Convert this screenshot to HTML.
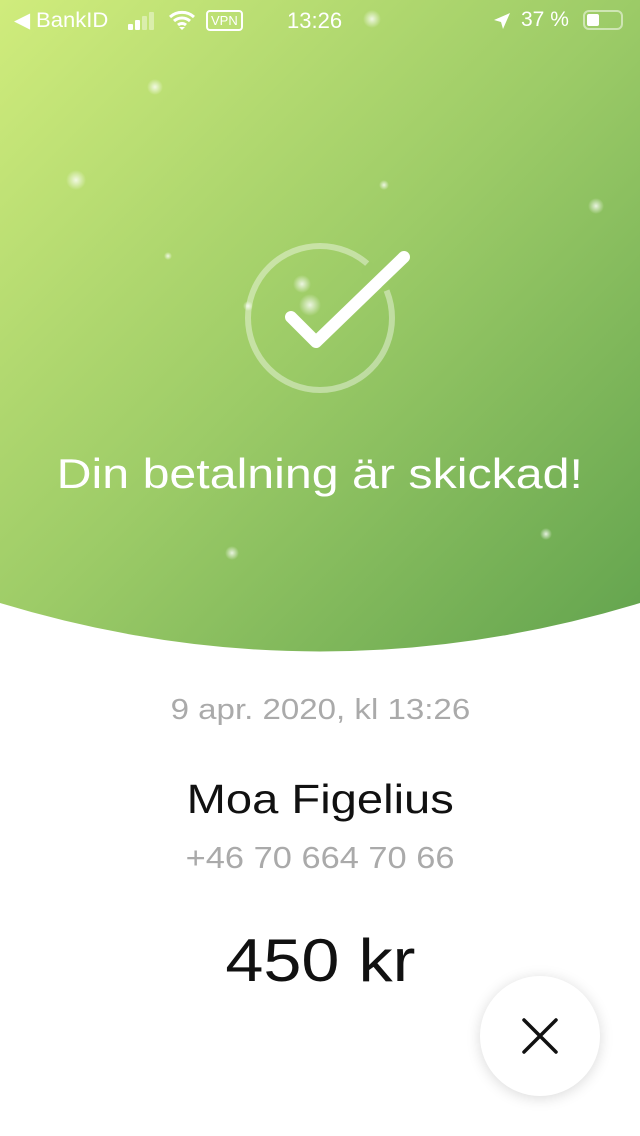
<!DOCTYPE html>
<html><head><meta charset="utf-8"><style>
html,body{margin:0;padding:0;width:640px;height:1136px;overflow:hidden;background:#fff;font-family:"Liberation Sans",sans-serif;}
.abs{position:absolute}
.sb{color:#fff;font-size:21px;top:8px}
.c{position:absolute;left:0;width:640px;text-align:center}
.c span{display:inline-block}
</style></head><body>
<svg class="abs" style="left:0;top:0" width="640" height="660" viewBox="0 0 640 660">
<defs><linearGradient id="g" x1="0" y1="0" x2="1" y2="1">
<stop offset="0" stop-color="#d0ec7c"/><stop offset="0.5" stop-color="#9ccb67"/><stop offset="1" stop-color="#62a34e"/></linearGradient>
<radialGradient id="d"><stop offset="0" stop-color="#fff" stop-opacity=".8"/><stop offset="1" stop-color="#fff" stop-opacity="0"/></radialGradient></defs>
<path d="M0 0H640V603Q320 700 0 603Z" fill="url(#g)"/>
<g fill="url(#d)">
<circle cx="155" cy="87" r="8"/><circle cx="76" cy="180" r="10"/><circle cx="384" cy="185" r="5"/><circle cx="596" cy="206" r="8"/>
<circle cx="168" cy="256" r="4"/><circle cx="302" cy="284" r="9"/><circle cx="310" cy="305" r="11"/><circle cx="248" cy="306" r="5"/>
<circle cx="232" cy="553" r="7"/><circle cx="546" cy="534" r="6"/><circle cx="372" cy="19" r="9"/>
</g>
<circle cx="320" cy="318" r="72" fill="none" stroke="#fff" stroke-opacity=".4" stroke-width="6"/>
<path d="M365 266 A72 72 0 0 1 383 292" fill="none" stroke="#9ccb67" stroke-width="14"/>
<path d="M291 317 L316 342 L404 257" fill="none" stroke="#fff" stroke-width="12" stroke-linecap="round" stroke-linejoin="round"/>
</svg>
<div class="abs sb" style="left:14px">◀ <span style="display:inline-block;transform:scaleX(1.05);transform-origin:left">BankID</span></div>
<svg class="abs" style="left:128px;top:11px" width="34" height="20"><rect x="0" y="13" width="5" height="6" fill="#fff" rx="1"/><rect x="7" y="9" width="5" height="10" fill="#fff" rx="1"/><rect x="14" y="5" width="5" height="14" fill="#fff" fill-opacity=".4" rx="1"/><rect x="21" y="1" width="5" height="18" fill="#fff" fill-opacity=".4" rx="1"/></svg>
<svg class="abs" style="left:168px;top:9px" width="30" height="22"><path d="M2 8a18 18 0 0 1 24 0M6 12a12 12 0 0 1 16 0M10 16a6 6 0 0 1 8 0" fill="none" stroke="#fff" stroke-width="3"/><path d="M11 18l3 3 3-3z" fill="#fff"/></svg>
<div class="abs" style="left:206px;top:10px;border:2px solid #fff;border-radius:4px;color:#fff;font-size:13px;padding:1px 3px;line-height:15px">VPN</div>
<div class="abs sb" style="left:287px;font-size:22px">13:26</div>
<svg class="abs" style="left:492px;top:11px" width="20" height="20"><path d="M18 2L2 9l7 2 2 7z" fill="#fff"/></svg>
<div class="abs sb" style="left:521px">37 %</div>
<div class="abs" style="left:583px;top:10px;width:40px;height:20px;border:2px solid rgba(255,255,255,.5);border-radius:6px;box-sizing:border-box"><div style="margin:2px;width:12px;height:12px;background:#fff;border-radius:2px"></div></div>
<div class="c" style="top:450px;color:#fff;font-size:42px"><span style="transform:scaleX(1.15)">Din betalning är skickad!</span></div>
<div class="c" style="top:694px;color:#aaa;font-size:29px"><span style="transform:scaleX(1.14)">9 apr. 2020, kl 13:26</span></div>
<div class="c" style="top:776px;color:#111;font-size:41px"><span style="transform:scaleX(1.15)">Moa Figelius</span></div>
<div class="c" style="top:840px;color:#aaa;font-size:31px"><span style="transform:scaleX(1.11)">+46 70 664 70 66</span></div>
<div class="c" style="top:926px;color:#111;font-size:60px"><span style="transform:scaleX(1.14)">450 kr</span></div>
<div class="abs" style="left:480px;top:976px;width:120px;height:120px;border-radius:60px;background:#fff;box-shadow:0 2px 14px rgba(0,0,0,.15)">
<svg width="120" height="120"><path d="M44 44L76 76M76 44L44 76" stroke="#111" stroke-width="3.5" stroke-linecap="round"/></svg></div>
</body></html>
